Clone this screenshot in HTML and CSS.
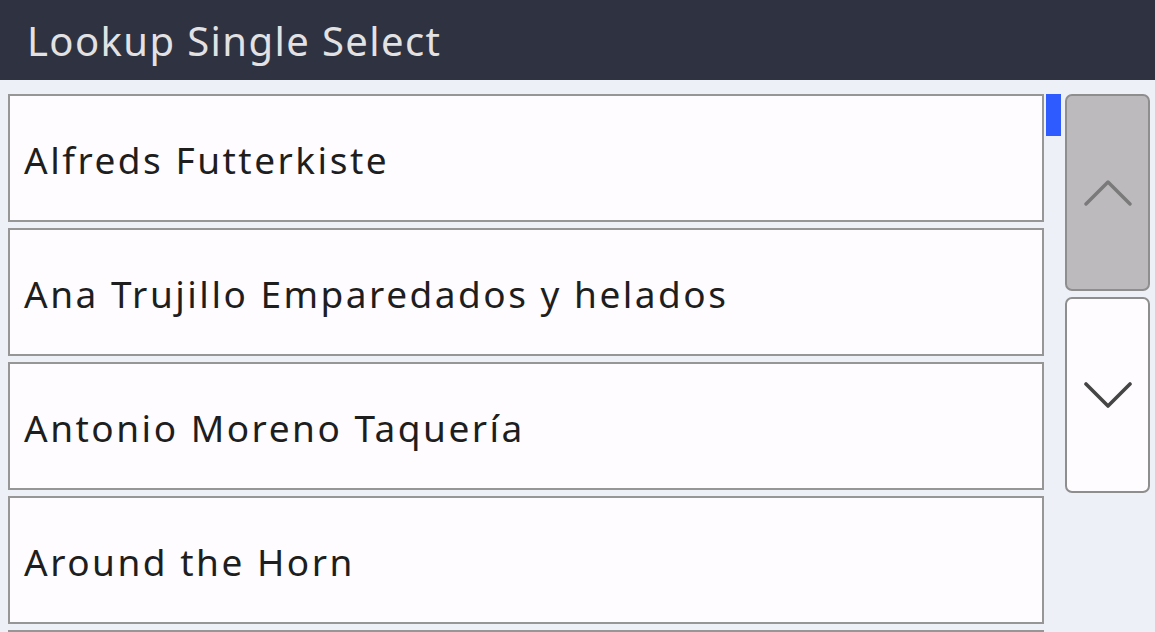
FILE: index.html
```html
<!DOCTYPE html>
<html>
<head>
<meta charset="utf-8">
<link rel="stylesheet" href="styles.css">
</head>
<body>
<header class="titlebar">Lookup Single Select</header>
<main class="content">
  <ul class="list">
    <li class="item">Alfreds Futterkiste</li>
    <li class="item">Ana Trujillo Emparedados y helados</li>
    <li class="item">Antonio Moreno Taquería</li>
    <li class="item">Around the Horn</li>
    <li class="item"></li>
  </ul>
  <div class="track"><div class="thumb"></div></div>
  <div class="buttons">
    <button class="btn btn-up" aria-label="Scroll up">
      <svg width="48" height="26" viewBox="0 0 48 26"><polyline points="2,24 24,2 46,24" fill="none" stroke="#7a7a7a" stroke-width="3.4" stroke-linecap="round" stroke-linejoin="round"/></svg>
    </button>
    <button class="btn btn-down" aria-label="Scroll down">
      <svg width="48" height="26" viewBox="0 0 48 26"><polyline points="2,2 24,24 46,2" fill="none" stroke="#454545" stroke-width="3.6" stroke-linecap="round" stroke-linejoin="round"/></svg>
    </button>
  </div>
</main>
</body>
</html>
```

FILE: styles.css
```css
html, body {
  margin: 0;
  padding: 0;
  width: 1155px;
  height: 632px;
  overflow: hidden;
  background: #eef0f7;
  font-family: "Noto Sans", "DejaVu Sans", sans-serif;
}

.titlebar {
  height: 80px;
  background: #2f3241;
  color: #e2e2e4;
  font-size: 40px;
  line-height: 82px;
  padding-left: 27px;
  box-sizing: border-box;
  letter-spacing: 1.4px;
}

.content {
  display: flex;
  align-items: flex-start;
  padding: 14px 5px 0 8px;
  height: 552px;
  box-sizing: border-box;
  overflow: hidden;
}

.list {
  list-style: none;
  margin: 0;
  padding: 0;
  width: 1036px;
  flex: none;
  display: flex;
  flex-direction: column;
  gap: 6px;
}

.item {
  height: 128px;
  box-sizing: border-box;
  border: 2px solid #969696;
  background: #fefcfe;
  color: #1e1e1e;
  font-size: 37px;
  letter-spacing: 2.5px;
  display: flex;
  align-items: center;
  padding-left: 14px;
  padding-top: 2px;
  flex: none;
}

.track {
  width: 21px;
  flex: none;
  display: flex;
  padding-left: 2px;
  box-sizing: border-box;
}

.thumb {
  width: 15px;
  height: 42px;
  background: #2e5bff;
}

.buttons {
  width: 85px;
  flex: none;
  display: flex;
  flex-direction: column;
  gap: 6px;
}

.btn {
  margin: 0;
  padding: 0;
  width: 85px;
  box-sizing: border-box;
  border: 2px solid #8e8e8e;
  border-radius: 7px;
  display: flex;
  align-items: center;
  justify-content: center;
}

.btn-up {
  height: 197px;
  background: #bcbabd;
}

.btn-down {
  height: 196px;
  background: #fefcfe;
}
```
